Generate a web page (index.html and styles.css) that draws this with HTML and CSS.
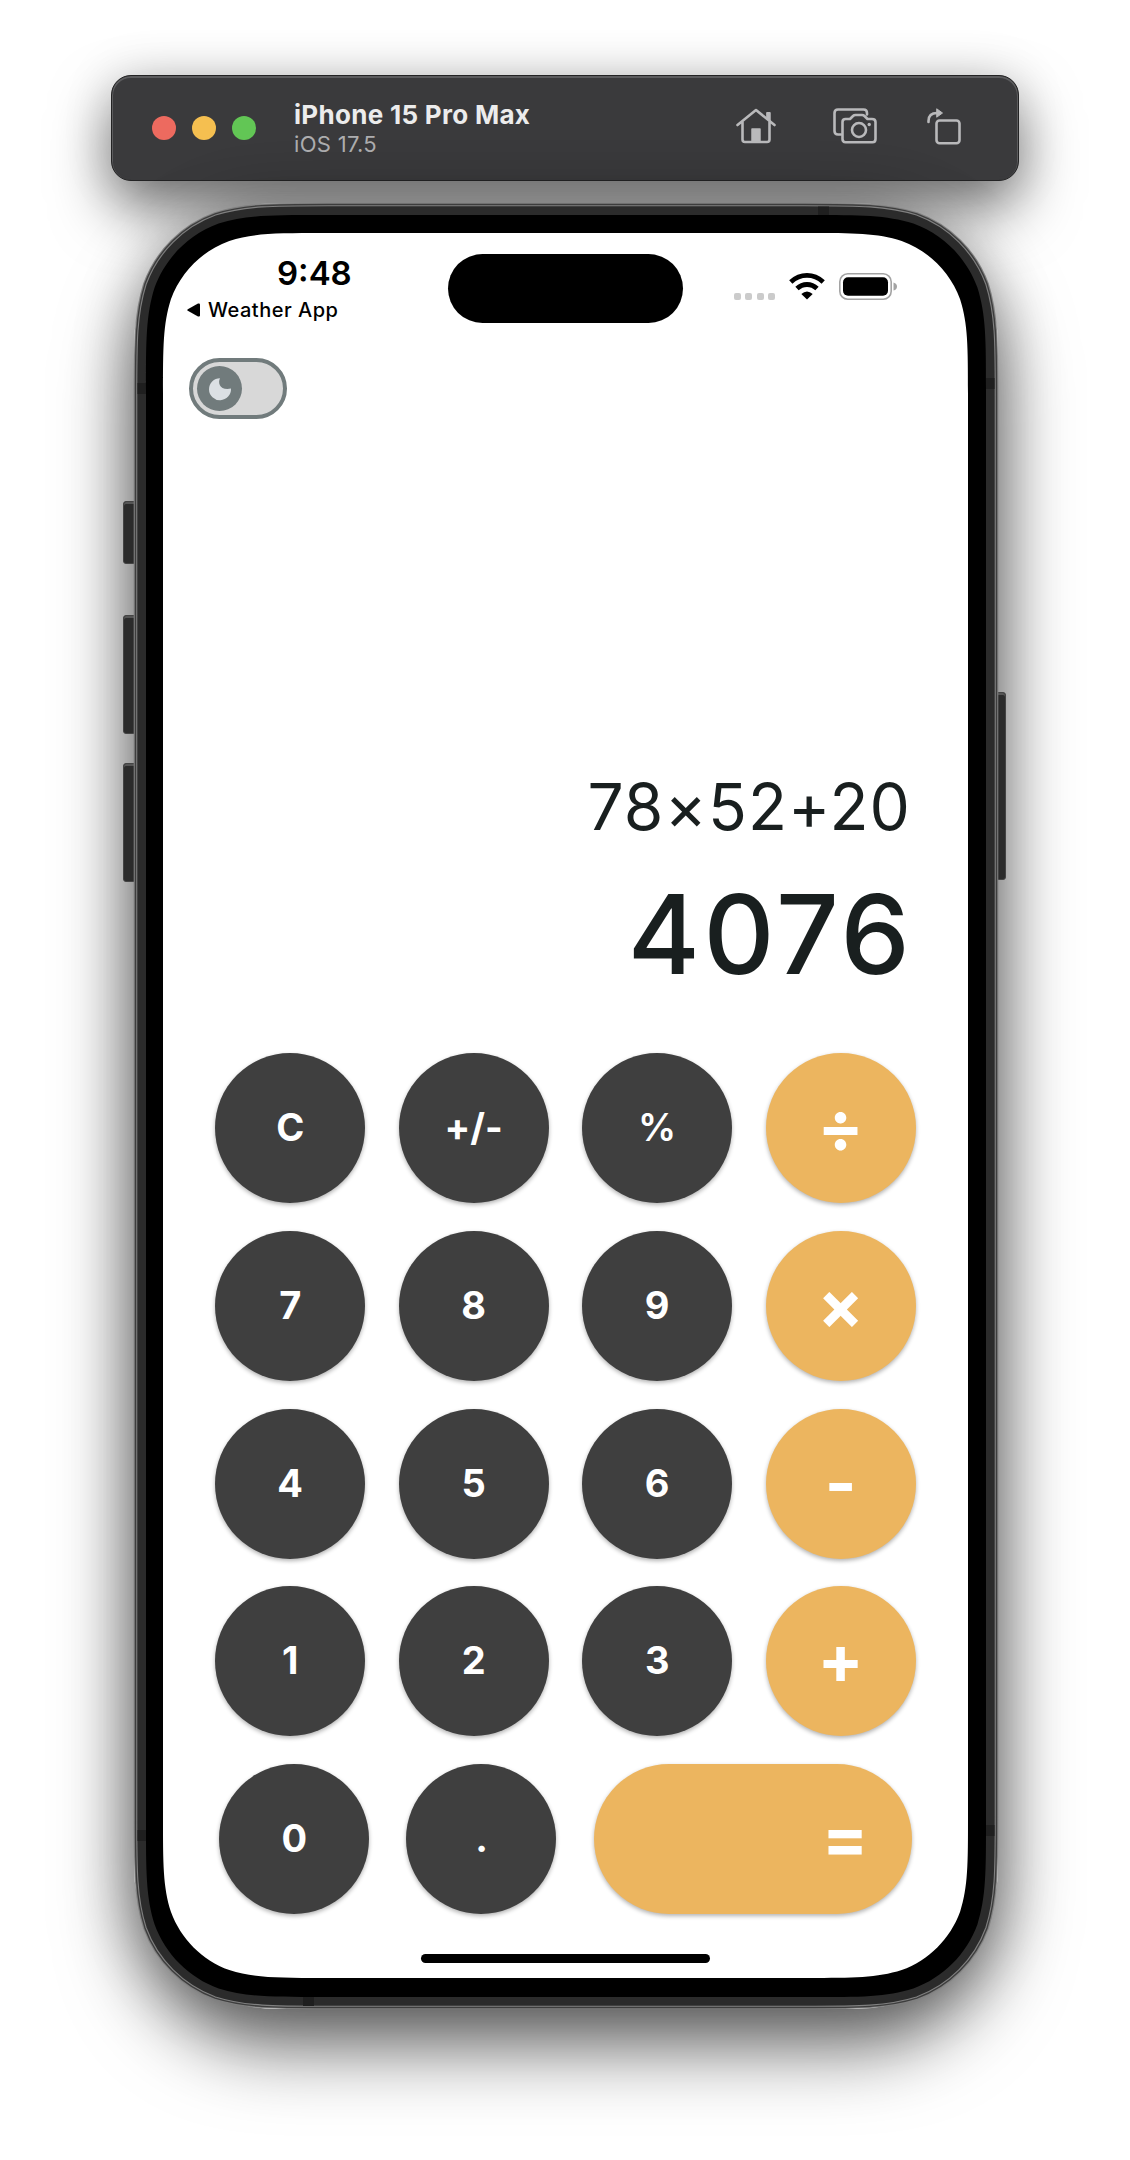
FILE: index.html
```html
<!DOCTYPE html>
<html lang="en">
<head>
<meta charset="utf-8">
<title>Calculator – iPhone 15 Pro Max</title>
<link rel="stylesheet" href="styles.css">
</head>
<body>
<header class="titlebar">
  <div class="lights"><span class="light red"></span><span class="light amber"></span><span class="light green"></span></div>
  <div class="device"><div class="device-name">iPhone 15 Pro Max</div><div class="device-os">iOS 17.5</div></div>
  <div class="tools">
    <svg class="tool-home" width="40" height="36" viewBox="0 0 40 36" fill="none" stroke="#b9b9bb" stroke-width="2.600" stroke-linecap="round" stroke-linejoin="round">
      <path d="M1.500 17 20 2 38.500 17M6.500 14V31.500Q6.500 34 9 34H31Q33.500 34 33.500 31.500V14"/>
      <path d="M31 4.500h3.200v9L31 10.500z" fill="#b9b9bb" stroke-width="1"/><path d="M16 21h8V34h-8z" fill="#b9b9bb" stroke-width="1.500"/>
    </svg>
    <svg class="tool-camera" width="44" height="36" viewBox="0 0 44 36" fill="none" stroke="#b9b9bb" stroke-width="2.600" stroke-linecap="round" stroke-linejoin="round">
      <path d="M8 26.500H5Q1.500 26.500 1.500 23V5Q1.500 1.500 5 1.500H30.500Q34 1.500 34 5V6.500"/>
      <path d="M12.500 11H17L20 8Q21 7 22.500 7H29Q30.500 7 31.500 8L34.500 11H39Q42.500 11 42.500 14V31Q42.500 34.200 39.500 34.200H12.500Q9.500 34.200 9.500 31V14Q9.500 11 12.500 11Z"/>
      <circle cx="26" cy="22" r="7"/><circle cx="36.200" cy="16.500" r="1.700" fill="#b9b9bb" stroke="none"/>
    </svg>
    <svg class="tool-rotate" width="34" height="37" viewBox="0 0 34 37" fill="none" stroke="#b9b9bb" stroke-width="2.600" stroke-linecap="round">
      <path d="M1.500 14V13Q1.500 5 10 5"/><path d="M10 1 15.500 5 10 9z" fill="#b9b9bb" stroke-width="1" stroke-linejoin="round"/>
      <rect x="9.500" y="12.500" width="23" height="22.800" rx="3"/>
    </svg>
  </div>
</header>

<main class="phone">
  <i class="side action"></i><i class="side vol-up"></i><i class="side vol-down"></i><i class="side power"></i>
  <svg class="frame" width="864" height="1806" viewBox="0 0 864 1806">
    <defs>
      <path id="shell" d="M194.100 1.500h475.800c55.500 0 83.200 0 113 9.400c32.600 11.900 58.300 37.600 70.200 70.200c9.400 29.800 9.400 57.500 9.400 113v1417.800c0 55.500 0 83.200-9.400 113c-11.900 32.600-37.600 58.300-70.200 70.200c-29.800 9.400-57.500 9.400-113 9.400h-475.800c-55.500 0-83.200 0-113-9.400c-32.600-11.900-58.300-37.600-70.200-70.200c-9.400-29.800-9.400-57.500-9.400-113v-1417.800c0-55.500 0-83.200 9.400-113c11.900-32.600 37.600-58.300 70.200-70.200c29.800-9.400 57.500-9.400 113-9.400z"/>
    </defs>
    <use href="#shell" fill="#2b2b2b" stroke="#808080" stroke-width="3.600"/>
    <use href="#shell" fill="none" stroke="#3d3d3d" stroke-width="1.400"/>
    <path fill="#1f1f1f" d="M684 3.500h11v10h-11zM169 1793h11v10h-11zM3.500 180h9v11h-9zM851.500 175h9v11h-9zM3.500 1627h9v11h-9zM851.500 1622h9v11h-9z"/>
    <path fill="#000" d="M187.800 12h488.400c50.600 0 75.900 0 103.200 8.600c29.700 10.800 53.200 34.300 64 64c8.600 27.300 8.600 52.600 8.600 103.200v1430.400c0 50.600 0 75.900-8.600 103.200c-10.800 29.700-34.300 53.200-64 64c-27.300 8.600-52.600 8.600-103.200 8.600h-488.400c-50.600 0-75.900 0-103.200-8.600c-29.700-10.800-53.200-34.300-64-64c-8.600-27.300-8.600-52.600-8.600-103.200v-1430.400c0-50.600 0-75.900 8.600-103.200c10.800-29.700 34.300-53.200 64-64c27.300-8.600 52.600-8.600 103.200-8.600z"/>
    <path fill="#fff" d="M189.500 30h484c46.200 0 69.300 0 94.200 7.900c27.100 9.900 48.600 31.300 58.400 58.400c7.900 24.900 7.900 48 7.900 94.200v1424c0 46.200 0 69.300-7.900 94.200c-9.900 27.100-31.300 48.600-58.400 58.400c-24.900 7.900-48 7.900-94.200 7.900h-484c-46.200 0-69.300 0-94.200-7.900c-27.100-9.900-48.600-31.300-58.400-58.400c-7.900-24.900-7.900-48-7.900-94.200v-1424c0-46.200 0-69.300 7.900-94.200c9.900-27.100 31.300-48.600 58.400-58.400c24.900-7.900 48-7.900 94.200-7.900z"/>
  </svg>
  <div class="screen">
    <div class="statusbar">
      <div class="status-left">
        <div class="clock">9:48</div>
        <div class="back"><svg width="13" height="14" viewBox="0 0 13 14"><path d="M.8 6.200 11 .6Q13 0 13 1.500V12.500Q13 14 11 13.400L.8 7.800Q-.3 7 .8 6.200z"/></svg><span>Weather App</span></div>
      </div>
      <div class="island"></div>
      <div class="status-right">
        <div class="cell"><i></i><i></i><i></i><i></i></div>
        <svg class="wifi" width="36" height="27" viewBox="0 0 36 27" fill="none" stroke="#000" stroke-width="4.800">
          <path d="M1.800 9Q9 2.400 18 2.400T34.200 9"/><path d="M8 15.600Q12.300 11.500 18 11.500T28 15.600"/><path d="M12.300 21Q18 16 23.700 21L18 26.600z" fill="#000" stroke="none"/>
        </svg>
        <svg class="battery" width="59" height="27" viewBox="0 0 59 27"><rect x=".8" y=".8" width="51.400" height="25.400" rx="8" fill="none" stroke="#a3a3a3" stroke-width="1.600"/><rect x="4" y="4.200" width="45" height="18.600" rx="5"/><path d="M54.500 9.500Q58 10.500 58 13.500T54.500 17.500z" fill="#a3a3a3"/></svg>
      </div>
    </div>
    <div class="toggle"><span class="knob"><svg width="24" height="24" viewBox="0 0 24 24"><path d="M12 1.200C9.500 6 12 13.800 23 11.600A11 11 0 1 1 12 1.200Z" fill="#dbe0e4"/></svg></span></div>
    <div class="display">
      <div class="expression">78×52+20</div>
      <div class="result">4076</div>
    </div>
    <div class="keys">
      <button class="key">C</button><button class="key">+/-</button><button class="key pct">%</button><button class="key op">÷</button>
      <button class="key">7</button><button class="key">8</button><button class="key">9</button><button class="key op">×</button>
      <button class="key">4</button><button class="key">5</button><button class="key">6</button><button class="key op">-</button>
      <button class="key">1</button><button class="key">2</button><button class="key">3</button><button class="key op">+</button>
    </div>
    <div class="last-row">
      <button class="key">0</button><button class="key">.</button><button class="key op equals">=</button>
    </div>
    <div class="home-indicator"></div>
  </div>
</main>
</body>
</html>
```
FILE: styles.css
```css
* { box-sizing: border-box; }
body {
  margin: 0;
  height: 2160px;
  padding-top: 75px;
  overflow: hidden;
  background: #fff;
  font-family: Inter, "Liberation Sans", sans-serif;
}
.titlebar {
  width: 908px;
  height: 106px;
  margin-left: 111px;
  padding: 0 57px 0 40px;
  display: flex;
  align-items: center;
  border-radius: 20px;
  background: #3a3a3c;
  border: 1px solid #232324;
  box-shadow: inset 0 1px 0 1px #5c5c5e, inset 0 -2px 0 1px #3a3a3c, 0 28px 58px rgba(0,0,0,.52), 0 0 50px rgba(0,0,0,.14);
}
.lights { display: flex; gap: 16px; }
.light { width: 24px; height: 24px; border-radius: 50%; }
.red { background: #ed6a5f; }
.amber { background: #f5bf50; }
.green { background: #62c655; }
.device { margin-left: 38px; }
.device-name { font-size: 26px; line-height: 31px; font-weight: 700; color: #ececec; letter-spacing: .3px; white-space: nowrap; }
.device-os { font-size: 22px; line-height: 28px; color: #adadaf; letter-spacing: .3px; }
.tools { display: flex; margin: 0 0 4px auto; align-items: center; }
.tool-camera { margin-left: 57px; }
.tool-rotate { margin-left: 50px; }

.phone {
  position: relative;
  width: 864px;
  height: 1806px;
  margin: 22px 0 0 134px;
  padding: 30px 30px 31px 29px;
  border-radius: 142px;
  box-shadow: 0 38px 74px rgba(0,0,0,.58), 0 0 60px rgba(0,0,0,.28);
}
.frame { position: absolute; left: 0; top: 0; overflow: visible; }
.screen {
  position: relative;
  width: 805px;
  height: 1745px;
  display: flex;
  flex-direction: column;
}
.side { position: absolute; left: -11px; width: 12px; background: #2b2b2b; border: 1px solid #444; border-radius: 3px 0 0 3px; box-shadow: inset 0 2px 0 #555; }
.action { top: 298px; height: 63px; }
.vol-up { top: 412px; height: 119px; }
.vol-down { top: 560px; height: 119px; }
.power { left: auto; right: -8px; width: 9px; top: 489px; height: 188px; border-radius: 0 3px 3px 0; }

.statusbar { height: 125px; padding-left: 24px; display: flex; }
.status-left { width: 261px; padding-top: 20px; }
.clock { font-size: 33px; line-height: 41px; font-weight: 600; margin-left: 90px; letter-spacing: 0; }
.back { display: flex; align-items: center; gap: 8px; font-size: 20px; line-height: 32px; font-weight: 500; letter-spacing: .5px; }
.island { width: 235px; height: 69px; margin-top: 21px; border-radius: 35px; background: #000; }
.status-right { display: flex; align-items: flex-end; height: 67px; margin-left: 51px; }
.cell { display: flex; gap: 4.300px; }
.cell i { width: 7px; height: 7px; border-radius: 2px; background: #cbcbcb; }
.wifi { margin-left: 14px; }
.battery { margin-left: 14px; }

.toggle { width: 98px; height: 61px; margin-left: 26px; padding: 4px; border: 4px solid #717b7c; border-radius: 31px; background: #d8d8d8; }
.knob { display: flex; width: 45px; height: 45px; border-radius: 50%; background: #717b7c; align-items: center; justify-content: center; }

.display { height: 634px; display: flex; flex-direction: column; justify-content: flex-end; align-items: flex-end; padding: 0 57px 53px 0; color: #191f1f; }
.expression { font-size: 64px; line-height: 76px; letter-spacing: 1.100px; }
.result { font-size: 110px; line-height: 132px; font-weight: 500; margin: 23px -2.500px 0 0; letter-spacing: 3.600px; }

.keys { display: grid; grid-template-columns: repeat(4, 150px); column-gap: 33.500px; row-gap: 27.800px; margin-left: 52.200px; }
.key { width: 150px; height: 150px; border: 0; padding: 0 0 1px; border-radius: 75px; background: #3f3f3f; color: #fff; font: 700 38px/149px Inter, "Liberation Sans", sans-serif; text-align: center; box-shadow: 0 2px 4px rgba(0,0,0,.3); }
.pct { font-weight: 600; }
.op { background: #ecb55f; font-size: 68px; line-height: 146px; padding-bottom: 4px; }
.last-row { display: flex; gap: 37.200px; margin: 28px 0 0 56.300px; }
.equals { width: 318.500px; padding-right: 44px; text-align: right; }
.home-indicator { width: 289px; height: 9.500px; border-radius: 5px; background: #000; margin: 39.300px 0 0 258px; }
```
